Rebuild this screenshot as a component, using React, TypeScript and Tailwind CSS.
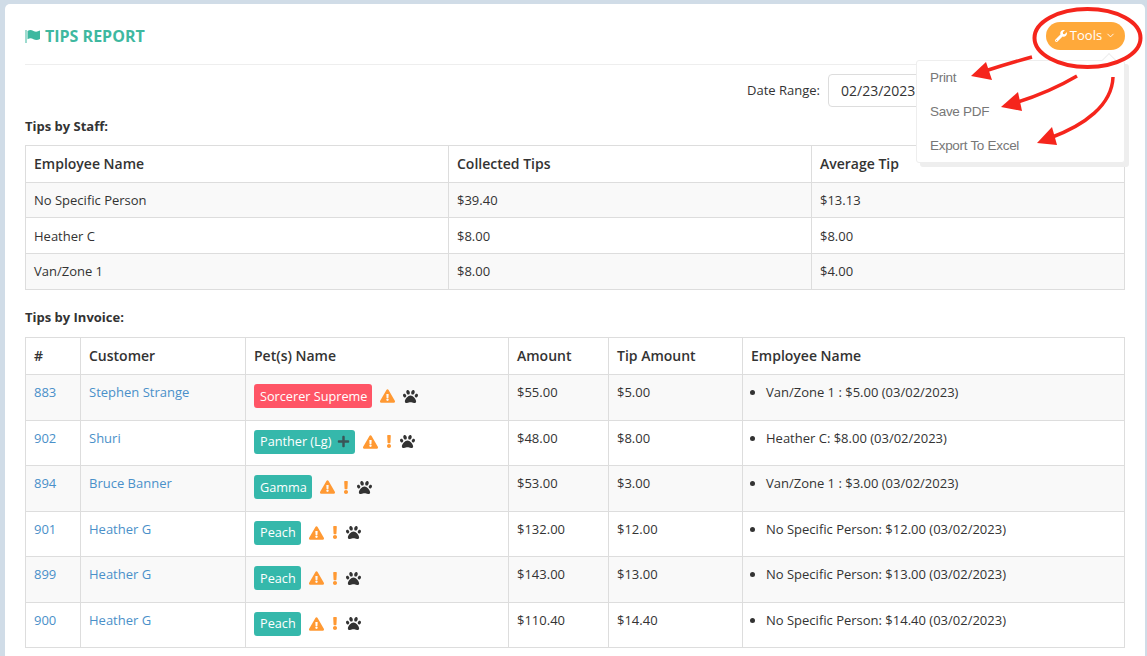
import { FaExclamation, FaExclamationTriangle, FaPaw, FaPlus, FaWrench } from "react-icons/fa";
import { FiChevronDown } from "react-icons/fi";

const staff = [
  ["No Specific Person", "$39.40", "$13.13"],
  ["Heather C", "$8.00", "$8.00"],
  ["Van/Zone 1", "$8.00", "$4.00"],
];

const invoices = [
  { id: "883", c: "Stephen Strange", p: "Sorcerer Supreme", red: true, plus: false, ex: false, a: "$55.00", t: "$5.00", e: "Van/Zone 1 : $5.00 (03/02/2023)" },
  { id: "902", c: "Shuri", p: "Panther (Lg)", red: false, plus: true, ex: true, a: "$48.00", t: "$8.00", e: "Heather C: $8.00 (03/02/2023)" },
  { id: "894", c: "Bruce Banner", p: "Gamma", red: false, plus: false, ex: true, a: "$53.00", t: "$3.00", e: "Van/Zone 1 : $3.00 (03/02/2023)" },
  { id: "901", c: "Heather G", p: "Peach", red: false, plus: false, ex: true, a: "$132.00", t: "$12.00", e: "No Specific Person: $12.00 (03/02/2023)" },
  { id: "899", c: "Heather G", p: "Peach", red: false, plus: false, ex: true, a: "$143.00", t: "$13.00", e: "No Specific Person: $13.00 (03/02/2023)" },
  { id: "900", c: "Heather G", p: "Peach", red: false, plus: false, ex: true, a: "$110.40", t: "$14.40", e: "No Specific Person: $14.40 (03/02/2023)" },
];

export default function App() {
  return (
    <div className="relative h-[656px] w-[1147px] overflow-hidden bg-[#d0dce7] pl-[5px] pt-[4px] text-[13px] text-[#333333] [font-family:'Open_Sans',sans-serif]">
      <div className="h-[700px] w-[1140px] rounded-[5px] bg-white px-5">
        <header className="flex h-[60.5px] items-center justify-between border-b border-[#eeeeee] pt-[4px]">
          <h1 className="flex items-center gap-[5px] text-[16px] font-bold text-[#3eb8a0]">
            <svg width="15" height="14" viewBox="0 0 15 14" fill="currentColor">
              <rect x="0.5" y="1" width="1" height="13" />
              <path d="M2.5 2 C5 0.5 6.5 1 8.5 2 C10.5 3 12.5 2.8 15 1.5 V10 C12.5 11.2 10.5 11.2 8.5 10.2 C6.5 9.2 5 9 2.5 10.2 Z" />
            </svg>
            <span>TIPS REPORT</span>
          </h1>
          <button className="mt-[1px] flex h-[28px] w-[79px] items-center justify-center gap-[3px] rounded-full bg-[#ffa93a] pb-[1px] text-[13px] text-white">
            <FaWrench className="h-[12px] w-[12px]" />
            <span>Tools</span>
            <FiChevronDown className="h-[11px] w-[11px]" />
          </button>
        </header>

        <div className="mt-[9px] flex h-[34px] items-center justify-end">
          <label className="mr-[8px]">Date Range:</label>
          <div className="flex h-[33px] w-[297px] items-center rounded-[4px] border border-[#dddddd] px-3 text-[14px] text-[#333333]">02/23/2023</div>
        </div>

        <h2 className="mt-[10px] text-[13px] font-bold leading-[17px]">Tips by Staff:</h2>
        <table className="mt-[10px] w-[1100px] table-fixed border-collapse">
          <colgroup>
            <col className="w-[423px]" />
            <col className="w-[363px]" />
            <col />
          </colgroup>
          <thead>
            <tr className="h-[37px] text-left text-[14px] font-semibold">
              <th className="border border-[#dddddd] px-2 font-semibold">Employee Name</th>
              <th className="border border-[#dddddd] px-2 font-semibold">Collected Tips</th>
              <th className="border border-[#dddddd] px-2 font-semibold">Average Tip</th>
            </tr>
          </thead>
          <tbody>
            {staff.map((r, i) => (
              <tr key={r[0]} className={`h-[35.7px] ${i % 2 === 0 ? "bg-[#f9f9f9]" : "bg-white"}`}>
                <td className="border border-[#dddddd] px-2 pt-[2px]">{r[0]}</td>
                <td className="border border-[#dddddd] px-2 pt-[2px]">{r[1]}</td>
                <td className="border border-[#dddddd] px-2 pt-[2px]">{r[2]}</td>
              </tr>
            ))}
          </tbody>
        </table>

        <h2 className="mt-[19.5px] text-[13px] font-bold leading-[17px]">Tips by Invoice:</h2>
        <table className="mt-[11px] w-[1100px] table-fixed border-collapse">
          <colgroup>
            <col className="w-[55px]" />
            <col className="w-[165px]" />
            <col className="w-[263px]" />
            <col className="w-[100px]" />
            <col className="w-[134px]" />
            <col />
          </colgroup>
          <thead>
            <tr className="h-[37px] text-left text-[14px]">
              {["#", "Customer", "Pet(s) Name", "Amount", "Tip Amount", "Employee Name"].map((h) => (
                <th key={h} className="border border-[#dddddd] px-2 pb-[2px] font-semibold">{h}</th>
              ))}
            </tr>
          </thead>
          <tbody>
            {invoices.map((r, i) => (
              <tr key={r.id} className={`h-[45.5px] ${i % 2 === 0 ? "bg-[#f9f9f9]" : "bg-white"}`}>
                <td className="border border-[#dddddd] px-2 pb-[10px] pt-2 align-top text-[#4a90c9]">{r.id}</td>
                <td className="border border-[#dddddd] px-2 pb-[10px] pt-2 align-top text-[#4a90c9]">{r.c}</td>
                <td className="border border-[#dddddd] px-2 pb-[2px] align-middle">
                  <div className="flex items-center">
                    <span className={`flex h-[24px] items-center rounded-[3px] pl-[6px] pr-[5px] text-[12.7px] text-white ${r.red ? "bg-[#ff5566]" : "bg-[#35b8ab]"}`}>
                      {r.p}
                      {r.plus && <FaPlus className="ml-[6px] h-[13px] w-[13px] text-[#3a5557]" />}
                    </span>
                    <FaExclamationTriangle className="ml-[8px] h-[14px] w-[15px] text-[#ff9933]" />
                    {r.ex && <FaExclamation className="ml-[6px] h-[13px] w-[10px] text-[#ff9933]" />}
                    <FaPaw className={`${r.ex ? "ml-[6px]" : "ml-[8px]"} h-[15px] w-[15px] text-[#333333]`} />
                  </div>
                </td>
                <td className="border border-[#dddddd] px-2 pb-[10px] pt-2 align-top">{r.a}</td>
                <td className="border border-[#dddddd] px-2 pb-[10px] pt-2 align-top">{r.t}</td>
                <td className="border border-[#dddddd] px-2 pb-[10px] pt-2 align-top">
                  <ul className="list-disc pl-[15px]">
                    <li>{r.e}</li>
                  </ul>
                </td>
              </tr>
            ))}
          </tbody>
        </table>
      </div>

      <div className="absolute left-[916px] top-[60px] h-[103px] w-[209px] rounded-[3px] border border-[#eeeeee] bg-white pl-[13px] text-[13.5px] leading-[34px] tracking-[-0.3px] text-[#777777] shadow-[4px_4px_0_#eeeeee] [font-family:'Liberation_Sans',sans-serif]">
        <div>Print</div>
        <div>Save PDF</div>
        <div>Export To Excel</div>
        <div className="absolute -top-[6px] right-[10px] h-[10px] w-[10px] rotate-45 border-l border-t border-[#eeeeee] bg-white" />
      </div>

      <svg className="pointer-events-none absolute left-0 top-0" width="1147" height="656" fill="none">
        <ellipse cx="1087.5" cy="38" rx="53" ry="29" stroke="#f5251c" strokeWidth="4" />
        <path d="M1032 57 Q1010 63 985 71" stroke="#f5251c" strokeWidth="3.5" />
        <polygon points="971,76 986,62 992,80" fill="#f5251c" />
        <path d="M1077 76 Q1050 92 1015 103" stroke="#f5251c" strokeWidth="3.5" />
        <polygon points="1001,107 1018,92 1022,111" fill="#f5251c" />
        <path d="M1113 77 C1112 105 1085 125 1050 138" stroke="#f5251c" strokeWidth="3.5" />
        <polygon points="1037,143 1052,127 1057,145" fill="#f5251c" />
      </svg>
    </div>
  );
}
